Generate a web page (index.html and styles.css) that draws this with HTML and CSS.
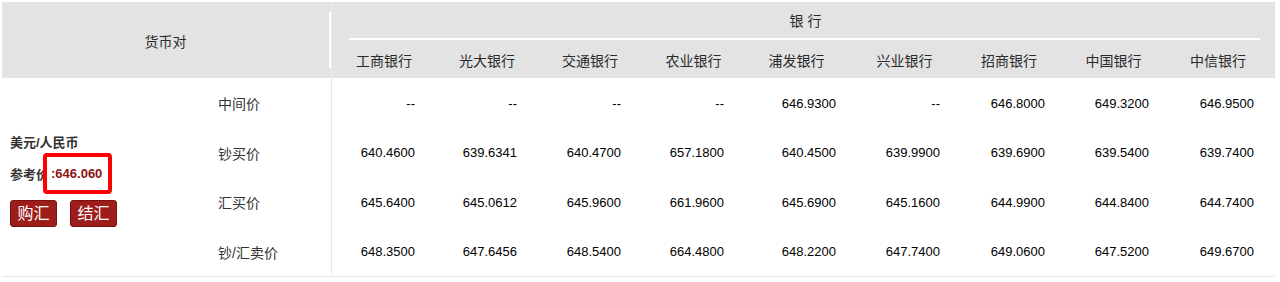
FILE: index.html
```html
<!DOCTYPE html>
<html lang="zh-CN">
<head>
<meta charset="utf-8">
<title>外汇牌价</title>
<link rel="stylesheet" href="styles.css">
</head>
<body>
<div class="fx">
  <div class="fx-head">
    <div class="h-pair"><div class="h-pair-in">货币对</div></div>
    <div class="h-group">银 行</div>
    <div class="h-bank">工商银行</div>
    <div class="h-bank">光大银行</div>
    <div class="h-bank">交通银行</div>
    <div class="h-bank">农业银行</div>
    <div class="h-bank h-bank--r">浦发银行</div>
    <div class="h-bank h-bank--r">兴业银行</div>
    <div class="h-bank h-bank--r">招商银行</div>
    <div class="h-bank h-bank--r">中国银行</div>
    <div class="h-bank h-bank--r">中信银行</div>
  </div>
  <div class="fx-body">
    <div class="pair">
      <div class="pair-name">美元/人民币</div>
      <div class="pair-ref">参考价<span class="ref-box">:646.060</span></div>
      <div class="pair-btns">
        <button class="btn">购汇</button>
        <button class="btn">结汇</button>
      </div>
    </div>

    <div class="lbl">中间价</div>
    <div class="val">--</div>
    <div class="val">--</div>
    <div class="val">--</div>
    <div class="val">--</div>
    <div class="val">646.9300</div>
    <div class="val">--</div>
    <div class="val">646.8000</div>
    <div class="val">649.3200</div>
    <div class="val">646.9500</div>

    <div class="lbl">钞买价</div>
    <div class="val">640.4600</div>
    <div class="val">639.6341</div>
    <div class="val">640.4700</div>
    <div class="val">657.1800</div>
    <div class="val">640.4500</div>
    <div class="val">639.9900</div>
    <div class="val">639.6900</div>
    <div class="val">639.5400</div>
    <div class="val">639.7400</div>

    <div class="lbl">汇买价</div>
    <div class="val">645.6400</div>
    <div class="val">645.0612</div>
    <div class="val">645.9600</div>
    <div class="val">661.9600</div>
    <div class="val">645.6900</div>
    <div class="val">645.1600</div>
    <div class="val">644.9900</div>
    <div class="val">644.8400</div>
    <div class="val">644.7400</div>

    <div class="lbl">钞/汇卖价</div>
    <div class="val">648.3500</div>
    <div class="val">647.6456</div>
    <div class="val">648.5400</div>
    <div class="val">664.4800</div>
    <div class="val">648.2200</div>
    <div class="val">647.7400</div>
    <div class="val">649.0600</div>
    <div class="val">647.5200</div>
    <div class="val">649.6700</div>
  </div>
</div>
</body>
</html>
```

FILE: styles.css
```css
* { box-sizing: border-box; }

html, body {
  margin: 0;
  padding: 0;
  background: #fff;
}

body {
  font-family: "Liberation Sans", "Noto Sans CJK SC", sans-serif;
  color: #333;
}

.fx {
  width: 1273px;
  margin: 2px 0 0 2px;
}

.fx-head,
.fx-body {
  display: grid;
  grid-template-columns: 198px 132px 104px 102px 104px 103px 112px 104px 105px 104px 105px;
}

.fx-head {
  background: #e3e3e3;
  grid-template-rows: 38px 38px;
  font-size: 14px;
  color: #2b2b2b;
}

.h-pair {
  grid-column: 1 / span 2;
  grid-row: 1 / span 2;
  padding: 10px 0;
  border-right: 1px solid #ececec;
}

.h-pair-in {
  height: 100%;
  display: flex;
  align-items: center;
  justify-content: center;
  border-right: 2px solid #fff;
  padding-top: 2px;
}

.h-group {
  grid-column: 3 / span 9;
  display: flex;
  align-items: center;
  justify-content: center;
  margin: 0 15px 0 17px;
  border-bottom: 2px solid #fff;
  padding-left: 2px;
}

.h-bank {
  display: flex;
  align-items: center;
  justify-content: center;
  padding-top: 2px;
}

.h-bank--r {
  padding-right: 9px;
}

.fx-body {
  grid-template-rows: 50px 49px 50px 49px;
  border-bottom: 1px solid #e6e6e6;
}

.pair {
  grid-column: 1;
  grid-row: 1 / span 4;
  padding: 56px 0 0 8px;
  font-size: 13px;
  font-weight: bold;
  color: #333;
}

.pair-name {
  line-height: 18px;
  height: 19px;
}

.pair-ref {
  display: flex;
  align-items: center;
  height: 41px;
}

.ref-box {
  display: inline-block;
  height: 41px;
  line-height: 33px;
  margin-left: -6px;
  padding: 0 6px 0 4px;
  border: 4px solid #ff0000;
  border-radius: 4px;
  background: #fff;
  color: #8e1313;
  font-size: 13px;
}

.pair-btns {
  display: flex;
  gap: 13px;
  margin-top: 6px;
}

.btn {
  width: 47px;
  height: 27px;
  padding: 0;
  background: #9c1d1a;
  border: 1px solid #7a1210;
  border-radius: 3px;
  color: #fff;
  font-family: "Liberation Sans", "Noto Sans CJK SC", sans-serif;
  font-size: 16px;
  line-height: 25px;
}

.lbl {
  grid-column: 2;
  display: flex;
  align-items: center;
  padding-left: 18px;
  font-size: 14px;
  color: #333;
  border-right: 1px solid #e8e8e8;
}

.val {
  display: flex;
  align-items: center;
  justify-content: flex-end;
  padding-right: 21px;
  font-size: 13px;
  color: #000;
}
```
